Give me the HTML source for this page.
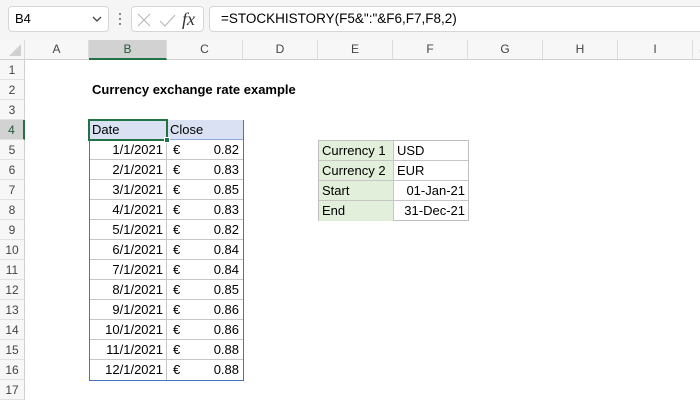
<!DOCTYPE html>
<html><head><style>
body{margin:0;width:700px;height:400px;overflow:hidden;background:#fff;font-family:"Liberation Sans",Calibri,sans-serif;position:relative}
div{position:absolute;box-sizing:border-box}
.t{font-size:13px;line-height:20px;white-space:nowrap}
.ch{top:40px;height:20px;border-right:1px solid #dcdcdc;border-bottom:1px solid #cfcfcf;background:#f7f7f7;text-align:center;font-size:12px;line-height:19px;color:#444}
.rh{left:0;width:25px;height:20px;border-bottom:1px solid #e2e2e2;border-right:1px solid #cfcfcf;background:#f7f7f7;text-align:center;font-size:12px;line-height:20px;color:#444}
.c{height:20px;border-right:1px solid #c6c6c6;border-bottom:1px solid #c6c6c6;font-size:13px;line-height:19px;padding:0 3px;white-space:nowrap}
</style></head><body>
<div style="left:0;top:0;width:700px;height:40px;background:#f5f5f5"></div>
<div style="left:8px;top:6px;width:101px;height:26px;background:#fff;border:1px solid #d6d6d6;border-radius:4px;font-size:13px;line-height:24px;padding-left:6px">B4</div>
<svg style="position:absolute;left:92px;top:16px" width="10" height="7"><path d="M1 1L5 5L9 1" stroke="#444" fill="none" stroke-width="1.3"/></svg>
<div style="left:119px;top:13px;width:2px;height:2px;background:#888"></div>
<div style="left:119px;top:18px;width:2px;height:2px;background:#888"></div>
<div style="left:119px;top:23px;width:2px;height:2px;background:#888"></div>
<div style="left:131px;top:6px;width:73px;height:26px;background:#fff;border:1px solid #d6d6d6;border-radius:4px"></div>
<svg style="position:absolute;left:136px;top:11px" width="64" height="18"><path d="M2 3L14 15M14 3L2 15" stroke="#bbb" stroke-width="1.2"/><path d="M24 10L29 15L39 4" stroke="#bbb" stroke-width="1.2" fill="none"/><text x="46" y="14" font-family="Liberation Serif" font-style="italic" font-size="18" fill="#333">fx</text></svg>
<div style="left:209px;top:6px;width:495px;height:26px;background:#fff;border:1px solid #d6d6d6;border-radius:4px;font-size:13.5px;line-height:24px;padding-left:11px">=STOCKHISTORY(F5&amp;":"&amp;F6,F7,F8,2)</div>
<div class="ch" style="left:0;width:25px"><svg width="22" height="18" style="position:absolute;left:2px;top:0"><path d="M19 4L19 16L7 16Z" fill="#d0d0d0"/></svg></div>
<div class="ch" style="left:25px;width:64px">A</div>
<div class="ch" style="left:89px;width:78px;background:#d2d2d2;border-bottom:2px solid #217346;color:#1e5c36">B</div>
<div class="ch" style="left:167px;width:76px">C</div>
<div class="ch" style="left:243px;width:75px">D</div>
<div class="ch" style="left:318px;width:75px">E</div>
<div class="ch" style="left:393px;width:75px">F</div>
<div class="ch" style="left:468px;width:75px">G</div>
<div class="ch" style="left:543px;width:75px">H</div>
<div class="ch" style="left:618px;width:75px">I</div>
<div class="ch" style="left:693px;width:20px">J</div>
<div class="rh" style="top:60px">1</div><div class="rh" style="top:80px">2</div><div class="rh" style="top:100px">3</div>
<div class="rh" style="top:120px;background:#d2d2d2;border-right:2px solid #217346;color:#1e5c36">4</div>
<div class="rh" style="top:140px">5</div><div class="rh" style="top:160px">6</div><div class="rh" style="top:180px">7</div><div class="rh" style="top:200px">8</div><div class="rh" style="top:220px">9</div><div class="rh" style="top:240px">10</div><div class="rh" style="top:260px">11</div><div class="rh" style="top:280px">12</div><div class="rh" style="top:300px">13</div><div class="rh" style="top:320px">14</div><div class="rh" style="top:340px">15</div><div class="rh" style="top:360px">16</div><div class="rh" style="top:380px">17</div>
<div class="t" style="left:92px;top:80px;font-weight:bold">Currency exchange rate example</div>
<div style="left:89px;top:120px;width:155px;height:261px;border:1px solid #4472c4"></div>
<div class="c" style="left:89px;top:120px;width:78px;background:#d9e1f2;border-bottom-color:#8ea9db">Date</div>
<div class="c" style="left:167px;top:120px;width:76px;background:#d9e1f2;border-bottom-color:#8ea9db;border-right:none">Close</div>
<div id="rows"></div>
<div style="left:88px;top:119px;width:80px;height:22px;border:2px solid #217346"></div>
<div style="left:164px;top:137px;width:6px;height:6px;background:#217346;border:1px solid #fff"></div>
<div style="left:318px;top:140px;width:151px;height:81px;border:1px solid #bfbfbf"></div>
<div class="c" style="left:319px;top:141px;width:75px;background:#e2efda;border-color:#c6c6c6">Currency 1</div>
<div class="c" style="left:394px;top:141px;width:74px;border-right:none">USD</div>
<div class="c" style="left:319px;top:161px;width:75px;background:#e2efda">Currency 2</div>
<div class="c" style="left:394px;top:161px;width:74px;border-right:none">EUR</div>
<div class="c" style="left:319px;top:181px;width:75px;background:#e2efda">Start</div>
<div class="c" style="left:394px;top:181px;width:74px;border-right:none;text-align:right">01-Jan-21</div>
<div class="c" style="left:319px;top:201px;width:75px;background:#e2efda;border-bottom:none">End</div>
<div class="c" style="left:394px;top:201px;width:74px;border:none;text-align:right">31-Dec-21</div>
<script>
var v=["0.82","0.83","0.85","0.83","0.82","0.84","0.84","0.85","0.86","0.86","0.88","0.88"],h="";
for(var i=0;i<12;i++){var t=140+i*20,b=i==11?"border-bottom:none;":"";
h+='<div class="c" style="left:90px;top:'+t+'px;width:77px;text-align:right;'+b+'">'+(i+1)+'/1/2021</div>';
h+='<div class="c" style="left:167px;top:'+t+'px;width:76px;border-right:none;'+b+'"><span style="position:absolute;left:6px">€</span><span style="position:absolute;right:4px">'+v[i]+'</span></div>';}
document.getElementById("rows").outerHTML=h;
</script>
</body></html>
